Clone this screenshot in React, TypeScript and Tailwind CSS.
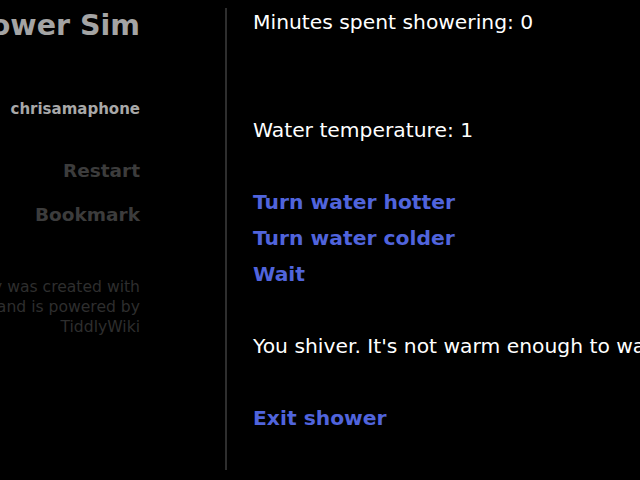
import * as React from 'react';

const font = { fontFamily: '"DejaVu Sans", Verdana, sans-serif' };

const Line = ({ children }: { children?: React.ReactNode }) => (
  <div className="h-9 leading-9 whitespace-nowrap">{children}</div>
);

const Link = ({ children }: { children: React.ReactNode }) => (
  <a className="font-bold text-[#5064dc] cursor-pointer">{children}</a>
);

export default function App() {
  return (
    <div className="w-[640px] h-[480px] bg-black overflow-hidden flex" style={font}>
      {/* sidebar, clipped on the left */}
      <div className="w-[140px] shrink-0 flex flex-col items-end text-right">
        <h1 className="mt-[6px] text-[28.5px] leading-10 font-bold text-[#a4a4a4] whitespace-nowrap">Shower Sim</h1>
        <div className="mt-[52px] text-[15px] font-bold text-[#a8a8a8] whitespace-nowrap">chrisamaphone</div>
        <div className="mt-[38px] text-[18.5px] font-bold text-[#3c3c3c] leading-6">Restart</div>
        <div className="mt-5 text-[18.5px] font-bold text-[#3c3c3c] leading-6">Bookmark</div>
        <div className="mt-[50px] text-[15.6px] leading-5 text-[#2e2e2e] whitespace-nowrap">
          <div>This story was created with</div>
          <div>Twine and is powered by</div>
          <div>TiddlyWiki</div>
        </div>
      </div>

      {/* divider */}
      <div className="ml-[85px] mt-2 h-[462px] w-[2px] bg-[#2e2e2e] shrink-0" />

      {/* passage */}
      <div className="ml-[26px] pt-1 text-[20.3px] text-white">
        <Line>Minutes spent showering: 0</Line>
        <Line />
        <Line />
        <Line>Water temperature: 1</Line>
        <Line />
        <Line><Link>Turn water hotter</Link></Line>
        <Line><Link>Turn water colder</Link></Line>
        <Line><Link>Wait</Link></Line>
        <Line />
        <Line>You shiver. It's not warm enough to wash yourself.</Line>
        <Line />
        <Line><Link>Exit shower</Link></Line>
      </div>
    </div>
  );
}
